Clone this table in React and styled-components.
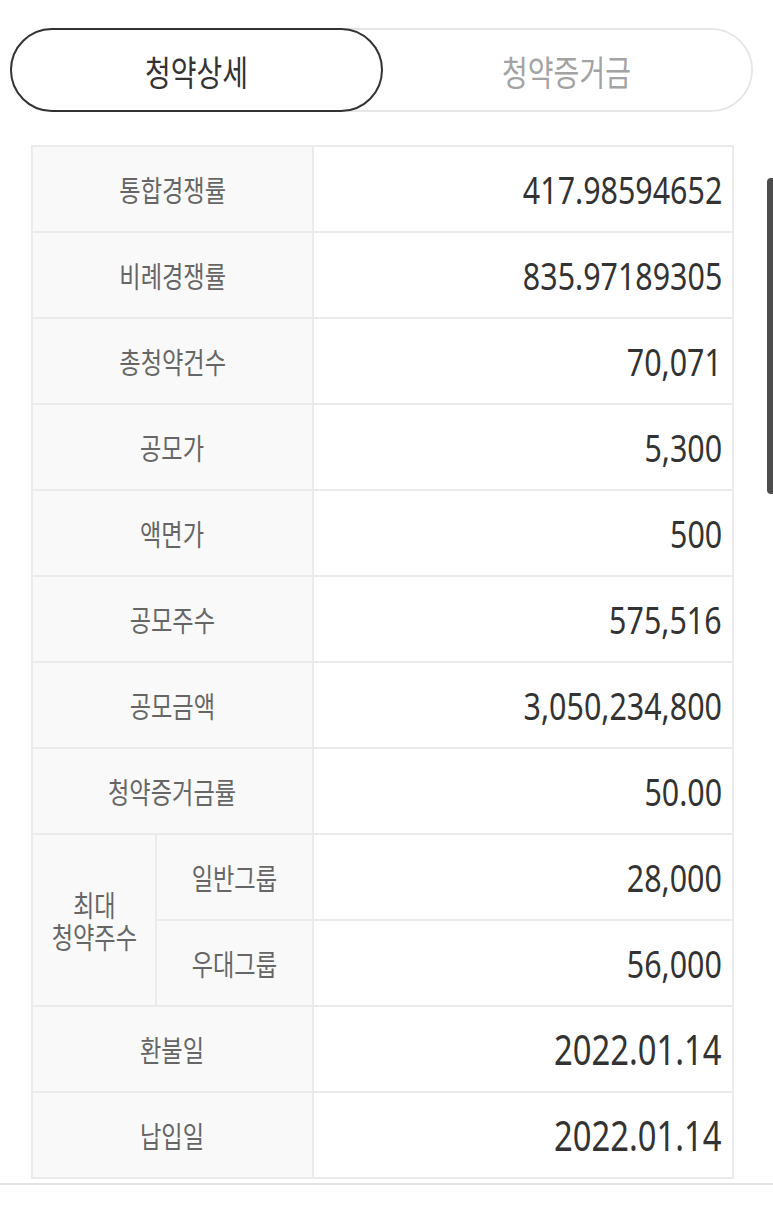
import React from "react";
import styled, { createGlobalStyle } from "styled-components";

const Global = createGlobalStyle`
  html, body { margin: 0; padding: 0; background: #ffffff; }
  body { font-family: "Noto Sans", "Noto Sans CJK KR", sans-serif; }
  * { box-sizing: border-box; }
`;

const Page = styled.div`
  width: 773px;
  min-height: 1205px;
  padding-top: 28px;
  display: flex;
  flex-direction: column;
`;

const TabBar = styled.div`
  margin-left: 10px;
  width: 743px;
  height: 84px;
  border: 2px solid #e6e6e6;
  border-radius: 42px;
  display: flex;
`;

const Tab = styled.div`
  flex: ${(p) => (p.$active ? "0 0 373px" : "1 1 auto")};
  margin: ${(p) => (p.$active ? "-2px 0 -2px -2px" : "0")};
  border: ${(p) => (p.$active ? "2px solid #333333" : "none")};
  border-radius: 42px;
  background: #ffffff;
  display: flex;
  align-items: center;
  justify-content: center;
  font-family: "Noto Sans CJK KR", sans-serif;
  font-size: 35px;
  color: ${(p) => (p.$active ? "#333333" : "#a3a3a3")};
`;

const Squeeze = styled.span`
  display: inline-block;
  transform: scaleX(0.8);
  transform-origin: ${(p) => p.$origin || "center"} center;
  white-space: nowrap;
`;

const Table = styled.div`
  margin: 33px 0 0 31px;
  width: 703px;
  display: grid;
  grid-template-columns: 124px 157px 1fr;
  grid-auto-rows: 86px;
  border-top: 2px solid #ebebeb;
  border-left: 2px solid #ebebeb;
`;

const LabelCell = styled.div`
  grid-column: span ${(p) => p.$cols || 1};
  grid-row: span ${(p) => p.$rows || 1};
  background: #f9f9f9;
  border-right: 2px solid #ebebeb;
  border-bottom: 2px solid #ebebeb;
  display: flex;
  align-items: center;
  justify-content: center;
  text-align: center;
  font-family: "Noto Sans CJK KR", sans-serif;
  font-size: 29px;
  line-height: 32px;
  color: #666666;
`;

const ValueCell = styled.div`
  background: #ffffff;
  border-right: 2px solid #ebebeb;
  border-bottom: 2px solid #ebebeb;
  display: flex;
  align-items: center;
  justify-content: flex-end;
  padding-right: 10px;
  font-family: "Noto Sans", sans-serif;
  font-size: ${(p) => (p.$date ? "41px" : "38px")};
  color: #333333;
`;

const ScrollThumb = styled.div`
  position: fixed;
  top: 178px;
  right: 0;
  width: 6px;
  height: 316px;
  border-radius: 4px 0 0 4px;
  background: #4d4d4d;
`;

const BottomBar = styled.div`
  position: fixed;
  left: 0;
  right: 0;
  bottom: 0;
  height: 22px;
  background: #ffffff;
  border-top: 2px solid #e3e3e3;
`;

const rowsBefore = [
  ["통합경쟁률", "417.98594652"],
  ["비례경쟁률", "835.97189305"],
  ["총청약건수", "70,071"],
  ["공모가", "5,300"],
  ["액면가", "500"],
  ["공모주수", "575,516"],
  ["공모금액", "3,050,234,800"],
  ["청약증거금률", "50.00"],
];

const rowsAfter = [
  ["환불일", "2022.01.14"],
  ["납입일", "2022.01.14"],
];

const Row = ({ label, value, date }) => (
  <>
    <LabelCell $cols={2}>
      <Squeeze>{label}</Squeeze>
    </LabelCell>
    <ValueCell $date={date}>
      <Squeeze $origin="right">{value}</Squeeze>
    </ValueCell>
  </>
);

export default function App() {
  return (
    <Page>
      <Global />
      <TabBar>
        <Tab $active>
          <Squeeze>청약상세</Squeeze>
        </Tab>
        <Tab>
          <Squeeze>청약증거금</Squeeze>
        </Tab>
      </TabBar>
      <Table>
        {rowsBefore.map(([l, v]) => (
          <Row key={l} label={l} value={v} />
        ))}
        <LabelCell $rows={2}>
          <Squeeze>
            최대
            <br />
            청약주수
          </Squeeze>
        </LabelCell>
        <LabelCell>
          <Squeeze>일반그룹</Squeeze>
        </LabelCell>
        <ValueCell>
          <Squeeze $origin="right">28,000</Squeeze>
        </ValueCell>
        <LabelCell>
          <Squeeze>우대그룹</Squeeze>
        </LabelCell>
        <ValueCell>
          <Squeeze $origin="right">56,000</Squeeze>
        </ValueCell>
        {rowsAfter.map(([l, v]) => (
          <Row key={l} label={l} value={v} date />
        ))}
      </Table>
      <ScrollThumb />
      <BottomBar />
    </Page>
  );
}
